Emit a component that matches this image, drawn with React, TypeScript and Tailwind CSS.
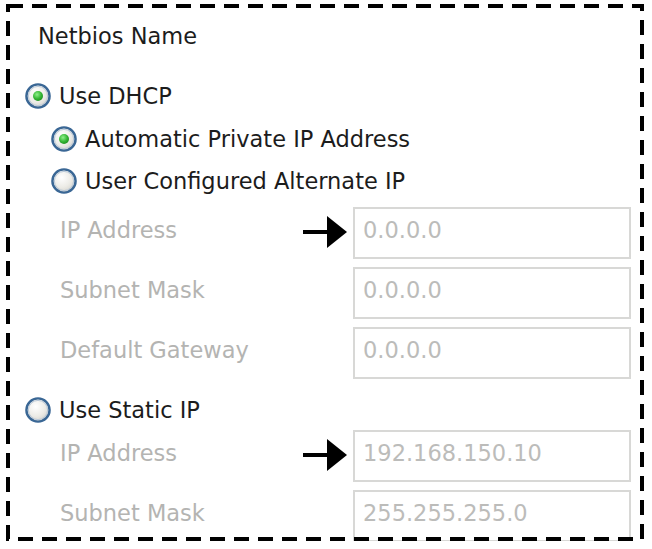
import React from "react";

function Radio({ checked }: { checked?: boolean }) {
  return (
    <svg width="26" height="26" viewBox="0 0 26 26" className="shrink-0">
      <defs>
        <radialGradient id="rfill" cx="0.4" cy="0.35" r="0.7">
          <stop offset="0" stopColor="#ffffff" />
          <stop offset="0.6" stopColor="#ecebe6" />
          <stop offset="1" stopColor="#d2d1cb" />
        </radialGradient>
        <radialGradient id="rdot" cx="0.4" cy="0.35" r="0.7">
          <stop offset="0" stopColor="#8ff08a" />
          <stop offset="0.6" stopColor="#35b635" />
          <stop offset="1" stopColor="#1d8f1d" />
        </radialGradient>
      </defs>
      <circle cx="13" cy="13" r="11.6" fill="url(#rfill)" stroke="#3a6795" strokeWidth="2.4" />
      <circle cx="13" cy="13" r="9.6" fill="none" stroke="#b9c8d8" strokeWidth="1" />
      {checked && <circle cx="13" cy="13" r="5" fill="url(#rdot)" />}
    </svg>
  );
}

function Arrow() {
  return (
    <svg width="44" height="36" viewBox="0 0 44 36" className="shrink-0">
      <rect x="0" y="15" width="26" height="4" fill="#000" />
      <polygon points="24,1 44,17 24,33" fill="#000" />
    </svg>
  );
}

function Field({ label, value, arrow }: { label: string; value: string; arrow?: boolean }) {
  return (
    <div className="flex h-[52px] items-center pl-[60px]">
      <div className="w-[243px] pb-[6px] text-[#b4b4b2] leading-none">{label}</div>
      <div className="flex w-[44px] items-center">{arrow && <Arrow />}</div>
      <div className="ml-[6px] flex h-[52px] w-[278px] items-center border-2 border-[#d8d8d6] pl-[8px] pb-[6px] text-[#bcbcba] leading-none">
        {value}
      </div>
    </div>
  );
}

function RadioRow({ label, checked, indent }: { label: string; checked?: boolean; indent?: boolean }) {
  return (
    <div className={`flex h-[40px] items-center gap-[8px] ${indent ? "pl-[51px]" : "pl-[25px]"}`}>
      <Radio checked={checked} />
      <span className="leading-none text-[#1c1c1c]">{label}</span>
    </div>
  );
}

export default function App() {
  return (
    <div
      className="relative h-[549px] w-[652px] overflow-hidden bg-white text-[22.5px]"
      style={{ fontFamily: '"DejaVu Sans", Verdana, sans-serif' }}
    >
      <div className="h-[541px] overflow-hidden">
        <div className="flex flex-col pt-[16px]">
          <div className="flex h-[40px] items-center pl-[38px] leading-none text-[#1c1c1c]">Netbios Name</div>
          <div className="mt-[20px]">
            <RadioRow label="Use DHCP" checked />
          </div>
          <div className="mt-[3px]">
            <RadioRow label="Automatic Private IP Address" checked indent />
          </div>
          <div className="mt-[2px]">
            <RadioRow label="User Configured Alternate IP" indent />
          </div>
          <div className="mt-[6px]">
            <Field label="IP Address" value="0.0.0.0" arrow />
          </div>
          <div className="mt-[8px]">
            <Field label="Subnet Mask" value="0.0.0.0" />
          </div>
          <div className="mt-[8px]">
            <Field label="Default Gateway" value="0.0.0.0" />
          </div>
          <div className="mt-[11px]">
            <RadioRow label="Use Static IP" />
          </div>
          <div>
            <Field label="IP Address" value="192.168.150.10" arrow />
          </div>
          <div className="mt-[8px]">
            <Field label="Subnet Mask" value="255.255.255.0" />
          </div>
        </div>
      </div>
      <svg className="pointer-events-none absolute left-0 top-0" width="652" height="549">
        <path d="M8 6 H642 V539 H8 Z" fill="none" stroke="#000" strokeWidth="4" strokeDasharray="15 9" />
      </svg>
    </div>
  );
}
